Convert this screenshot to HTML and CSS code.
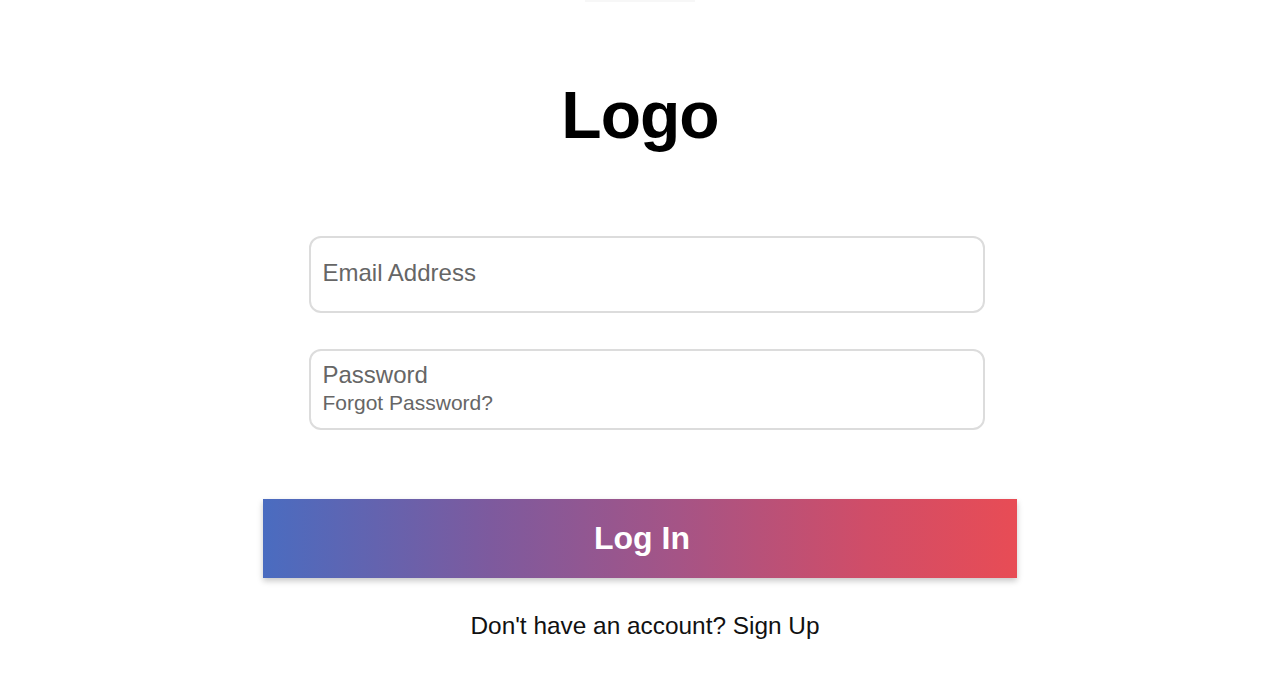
FILE: index.html
```html
<!DOCTYPE html>
<html lang="en">
<head>
    <meta charset="UTF-8">
    <meta name="viewport" content="width=device-width, initial-scale=1.0">
    <title>Log In</title>
    <link rel="stylesheet" href="styles.css">
</head>
<body>
    <div class="top-line"></div>
    <main class="login">
        <h1 class="logo">Logo</h1>

        <form class="login-form">
            <div class="field">
                <span class="placeholder">Email Address</span>
            </div>
            <div class="field field-password">
                <span class="placeholder">Password</span>
                <a href="#" class="forgot">Forgot Password?</a>
            </div>
            <button type="button" class="btn-login">Log In</button>
        </form>

        <p class="signup">Don't have an account? Sign Up</p>
    </main>
</body>
</html>
```

FILE: styles.css
```css
body {
    margin: 0;
    padding: 0;
    background: #fff;
    font-family: "Liberation Sans", Arial, sans-serif;
    color: #111;
}

.top-line {
    width: 110px;
    height: 2px;
    margin: 0 auto;
    background: #f7f7f7;
}

.login {
    display: flex;
    flex-direction: column;
    align-items: center;
}

.logo {
    margin: 73px 0 0;
    font-size: 66px;
    font-weight: bold;
    line-height: 80px;
    letter-spacing: -1px;
    color: #000;
}

.login-form {
    display: flex;
    flex-direction: column;
    align-items: center;
    margin-top: 81px;
}

.field {
    box-sizing: border-box;
    width: 676px;
    height: 77px;
    margin-left: 13px;
    padding: 0 12px 3px;
    border: 2px solid #dcdcdc;
    border-radius: 12px;
    display: flex;
    flex-direction: column;
    justify-content: center;
}

.field-password {
    height: 81px;
    margin-top: 36px;
    padding-top: 0;
    padding-bottom: 4px;
}

.placeholder {
    font-size: 24px;
    color: #666;
}

.forgot {
    font-size: 21px;
    color: #666;
    text-decoration: none;
    margin-top: 2px;
}

.btn-login {
    width: 754px;
    height: 79px;
    margin-top: 69px;
    border: none;
    background: linear-gradient(to right, #4a6cc0 0%, #7d5a9e 30%, #a55486 55%, #d04d68 80%, #e84c55 100%);
    box-shadow: 0 3px 6px rgba(0, 0, 0, 0.22);
    color: #fff;
    font-family: "Liberation Sans", Arial, sans-serif;
    font-size: 32px;
    font-weight: bold;
    padding: 0 0 0 4px;
    cursor: pointer;
}

.signup {
    margin: 34px 0 0 10px;
    font-size: 24.4px;
    color: #111;
}
```
